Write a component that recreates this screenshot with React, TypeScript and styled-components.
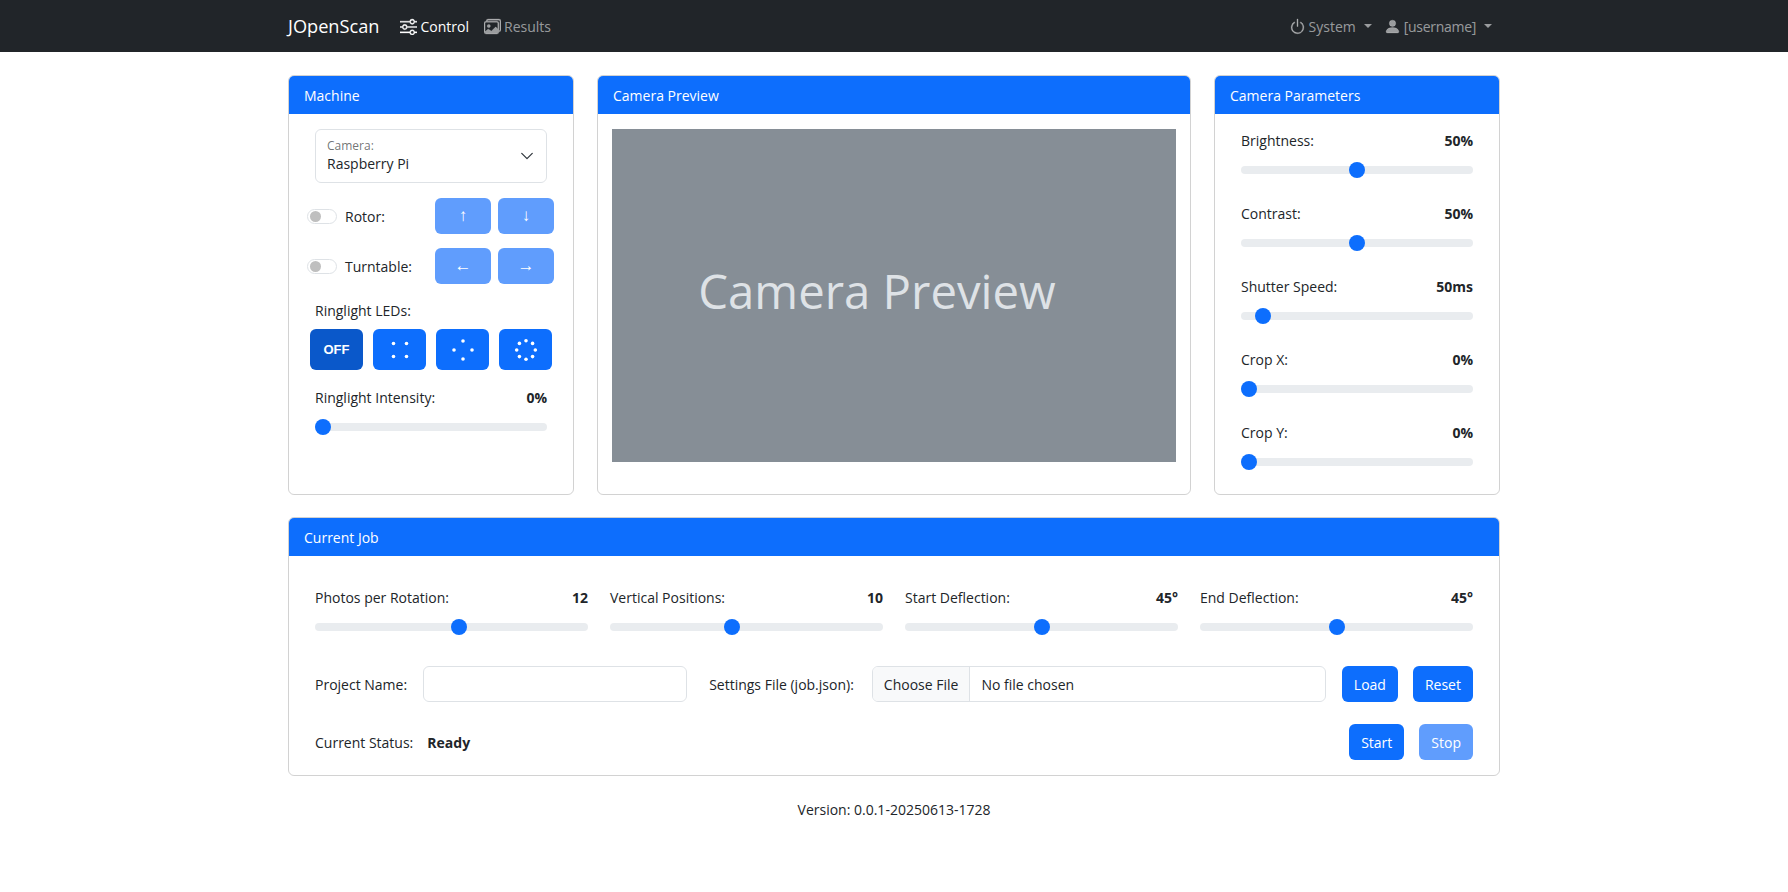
import styled, { createGlobalStyle } from "styled-components";
import { BsImages, BsPersonFill, BsPower, BsSliders } from "react-icons/bs";

const GlobalStyle = createGlobalStyle`
  * {
    box-sizing: border-box;
  }
  body {
    margin: 0;
    background: #fff;
    color: #212529;
    font-family: "Open Sans", "Noto Sans", sans-serif;
    font-size: 14px;
    line-height: 21px;
  }
`;

const Navbar = styled.nav`
  height: 52px;
  background: #212529;
  padding: 0 288px;
  display: flex;
  align-items: center;
`;

const Brand = styled.div`
  color: #fff;
  font-size: 18.2px;
  margin-right: 21px;
`;

const NavItem = styled.div<{ $active?: boolean }>`
  display: flex;
  align-items: center;
  gap: 3px;
  margin-right: 15px;
  color: ${(p) => (p.$active ? "#fff" : "rgba(255, 255, 255, 0.55)")};
  svg {
    font-size: 17px;
    stroke: currentColor;
    stroke-width: 0.35px;
  }
  &:last-child {
    margin-right: 0;
  }
`;

const Username = styled.span`
  letter-spacing: -0.3px;
`;

const Caret = styled.span`
  margin-left: 5px;
  width: 0;
  height: 0;
  border-top: 4px solid currentColor;
  border-left: 4px solid transparent;
  border-right: 4px solid transparent;
`;

const NavRight = styled.div`
  margin-left: auto;
  display: flex;
  gap: 12px;
  padding-right: 8px;
  ${NavItem} {
    margin-right: 0;
  }
`;

const Main = styled.main`
  width: 1212px;
  margin: 23px auto 0;
  display: flex;
  flex-direction: column;
  gap: 22px;
`;

const TopRow = styled.div`
  display: grid;
  grid-template-columns: 286px 594px 286px;
  gap: 23px;
`;

const Card = styled.section`
  border: 1px solid rgba(0, 0, 0, 0.175);
  border-radius: 6px;
  overflow: hidden;
  display: flex;
  flex-direction: column;
`;

const CardHeader = styled.header`
  height: 38px;
  background: #0d6efd;
  color: #fff;
  padding: 0 15px;
  display: flex;
  align-items: center;
`;

const MachineBody = styled.div`
  height: 380px;
  padding: 15px 19px 0 21px;
  display: flex;
  flex-direction: column;
`;

const SelectBox = styled.div`
  margin: 0 7px 0 5px;
  height: 54px;
  border: 1px solid #dee2e6;
  border-radius: 6px;
  padding: 8px 11px 0;
  position: relative;
`;

const SelectLabel = styled.div`
  font-size: 12px;
  line-height: 15px;
  color: rgba(33, 37, 41, 0.65);
`;

const SelectValue = styled.div`
  line-height: 21px;
`;

const Chevron = styled.svg`
  position: absolute;
  right: 12px;
  top: 19px;
  width: 14px;
  height: 14px;
`;

const JogRow = styled.div`
  display: flex;
  align-items: center;
  margin-top: 15px;
  height: 36px;
  & + & {
    margin-top: 14px;
  }
`;

const Switch = styled.span`
  width: 30px;
  height: 15px;
  margin-left: -3px;
  border: 1px solid #dee2e6;
  border-radius: 8px;
  display: flex;
  align-items: center;
  padding-left: 2px;
  &::before {
    content: "";
    width: 11px;
    height: 11px;
    border-radius: 50%;
    background: #bfbfbf;
  }
`;

const JogLabel = styled.span`
  margin-left: 8px;
  flex: 1;
`;

const JogButton = styled.button`
  width: 56px;
  height: 36px;
  margin-left: 7px;
  border: none;
  border-radius: 6px;
  background: #609dfd;
  color: #fff;
  font-family: "Liberation Sans", sans-serif;
  font-size: 17px;
  font-weight: 700;
  padding: 0;
`;

const SectionLabel = styled.div`
  margin: 16px 0 0 5px;
`;

const LedRow = styled.div`
  display: flex;
  justify-content: space-between;
  margin: 8px 0 0 0;
  padding-right: 2px;
`;

const LedButton = styled.button<{ $active?: boolean }>`
  width: 53px;
  height: 41px;
  border: none;
  border-radius: 6px;
  padding: 0;
  background: ${(p) => (p.$active ? "#0a58ca" : "#0d6efd")};
  color: #fff;
  font-family: "Liberation Sans", sans-serif;
  font-size: 13px;
  font-weight: 700;
  display: flex;
  align-items: center;
  justify-content: center;
`;

const SliderHead = styled.div`
  display: flex;
  justify-content: space-between;
`;

const SliderValue = styled.strong`
  font-weight: 700;
`;

const Range = styled.input.attrs({ type: "range" })`
  appearance: none;
  display: block;
  width: 100%;
  height: 16px;
  margin: 11px 0 0;
  padding: 0;
  background: transparent;
  &::-webkit-slider-runnable-track {
    height: 8px;
    border-radius: 8px;
    background: #e9ecef;
  }
  &::-webkit-slider-thumb {
    appearance: none;
    width: 16px;
    height: 16px;
    margin-top: -4px;
    border-radius: 50%;
    background: #0d6efd;
  }
`;

const IntensityBlock = styled.div`
  margin: 17px 7px 0 5px;
`;

const PreviewBody = styled.div`
  padding: 15px 14px;
  flex: 1;
`;

const Preview = styled.div`
  height: 333px;
  background: #868e96;
  color: #dee2e6;
  font-size: 47.3px;
  display: flex;
  align-items: center;
  justify-content: center;
  padding: 0 34px 10px 0;
`;

const ParamBody = styled.div`
  padding: 16px 26px 0;
  display: flex;
  flex-direction: column;
  gap: 25px;
`;

const JobBody = styled.div`
  padding: 31px 26px 15px;
`;

const JobSliders = styled.div`
  display: grid;
  grid-template-columns: repeat(4, 1fr);
  gap: 22px;
`;

const FormRow = styled.div`
  display: flex;
  align-items: center;
  margin-top: 31px;
  height: 36px;
`;

const TextInput = styled.div`
  width: 264px;
  height: 36px;
  margin: 0 22px 0 16px;
  border: 1px solid #dee2e6;
  border-radius: 6px;
`;

const FileInput = styled.div`
  width: 454px;
  height: 36px;
  margin: 0 16px 0 18px;
  border: 1px solid #dee2e6;
  border-radius: 6px;
  display: flex;
  align-items: center;
  overflow: hidden;
`;

const FileButton = styled.span`
  height: 100%;
  padding: 0 11px;
  background: #f8f9fa;
  border-right: 1px solid #dee2e6;
  display: flex;
  align-items: center;
`;

const FileName = styled.span`
  padding-left: 11px;
`;

const ActionButton = styled.button<{ $disabled?: boolean }>`
  height: 36px;
  padding: 0 12px;
  margin-left: 15px;
  border: none;
  border-radius: 6px;
  background: ${(p) => (p.$disabled ? "#609dfd" : "#0d6efd")};
  color: #fff;
  font: inherit;
`;

const FormActionButton = styled(ActionButton)`
  &:first-of-type {
    margin-left: 0;
  }
`;

const StatusRow = styled.div`
  display: flex;
  align-items: center;
  margin-top: 22px;
  height: 36px;
`;

const StatusValue = styled.strong`
  margin-left: 14px;
`;

const StatusActions = styled.div`
  margin-left: auto;
  display: flex;
`;

const Footer = styled.footer`
  text-align: center;
  margin-top: 23px;
`;

const Dots = ({ points }: { points: [number, number][] }) => (
  <svg width="28" height="28" viewBox="0 0 28 28" fill="#fff">
    {points.map(([x, y]) => (
      <circle key={`${x}-${y}`} cx={x} cy={y} r="1.8" />
    ))}
  </svg>
);

const ring = Array.from({ length: 8 }, (_, i): [number, number] => {
  const a = (i * Math.PI) / 4;
  return [14 + 9.3 * Math.sin(a), 14 - 9.3 * Math.cos(a)];
});

function Slider({ label, value, pos }: { label: string; value: string; pos: number }) {
  return (
    <div>
      <SliderHead>
        <span>{label}</span>
        <SliderValue>{value}</SliderValue>
      </SliderHead>
      <Range min={0} max={1000} defaultValue={pos * 10} />
    </div>
  );
}

function App() {
  return (
    <>
      <GlobalStyle />
      <Navbar>
        <Brand>JOpenScan</Brand>
        <NavItem $active>
          <BsSliders />
          Control
        </NavItem>
        <NavItem>
          <BsImages />
          Results
        </NavItem>
        <NavRight>
          <NavItem>
            <BsPower />
            System
            <Caret />
          </NavItem>
          <NavItem>
            <BsPersonFill />
            <Username>[username]</Username>
            <Caret />
          </NavItem>
        </NavRight>
      </Navbar>
      <Main>
        <TopRow>
          <Card>
            <CardHeader>Machine</CardHeader>
            <MachineBody>
              <SelectBox>
                <SelectLabel>Camera:</SelectLabel>
                <SelectValue>Raspberry Pi</SelectValue>
                <Chevron viewBox="0 0 16 16" fill="none" stroke="#343a40" strokeWidth="1.5" strokeLinecap="round" strokeLinejoin="round">
                  <path d="m2 5 6 6 6-6" />
                </Chevron>
              </SelectBox>
              <JogRow>
                <Switch />
                <JogLabel>Rotor:</JogLabel>
                <JogButton>↑</JogButton>
                <JogButton>↓</JogButton>
              </JogRow>
              <JogRow>
                <Switch />
                <JogLabel>Turntable:</JogLabel>
                <JogButton>←</JogButton>
                <JogButton>→</JogButton>
              </JogRow>
              <SectionLabel>Ringlight LEDs:</SectionLabel>
              <LedRow>
                <LedButton $active>OFF</LedButton>
                <LedButton>
                  <Dots points={[[7.5, 7.5], [20.5, 7.5], [7.5, 20.5], [20.5, 20.5]]} />
                </LedButton>
                <LedButton>
                  <Dots points={[[14, 5], [23, 14], [14, 23], [5, 14]]} />
                </LedButton>
                <LedButton>
                  <Dots points={ring} />
                </LedButton>
              </LedRow>
              <IntensityBlock>
                <Slider label="Ringlight Intensity:" value="0%" pos={0} />
              </IntensityBlock>
            </MachineBody>
          </Card>
          <Card>
            <CardHeader>Camera Preview</CardHeader>
            <PreviewBody>
              <Preview>Camera Preview</Preview>
            </PreviewBody>
          </Card>
          <Card>
            <CardHeader>Camera Parameters</CardHeader>
            <ParamBody>
              <Slider label="Brightness:" value="50%" pos={50} />
              <Slider label="Contrast:" value="50%" pos={50} />
              <Slider label="Shutter Speed:" value="50ms" pos={6.5} />
              <Slider label="Crop X:" value="0%" pos={0} />
              <Slider label="Crop Y:" value="0%" pos={0} />
            </ParamBody>
          </Card>
        </TopRow>
        <Card>
          <CardHeader>Current Job</CardHeader>
          <JobBody>
            <JobSliders>
              <Slider label="Photos per Rotation:" value="12" pos={53} />
              <Slider label="Vertical Positions:" value="10" pos={44.4} />
              <Slider label="Start Deflection:" value="45°" pos={50} />
              <Slider label="End Deflection:" value="45°" pos={50} />
            </JobSliders>
            <FormRow>
              <span>Project Name:</span>
              <TextInput />
              <span>Settings File (job.json):</span>
              <FileInput>
                <FileButton>Choose File</FileButton>
                <FileName>No file chosen</FileName>
              </FileInput>
              <FormActionButton>Load</FormActionButton>
              <ActionButton>Reset</ActionButton>
            </FormRow>
            <StatusRow>
              <span>Current Status:</span>
              <StatusValue>Ready</StatusValue>
              <StatusActions>
                <ActionButton>Start</ActionButton>
                <ActionButton $disabled>Stop</ActionButton>
              </StatusActions>
            </StatusRow>
          </JobBody>
        </Card>
      </Main>
      <Footer>Version: 0.0.1-20250613-1728</Footer>
    </>
  );
}

export default App;
